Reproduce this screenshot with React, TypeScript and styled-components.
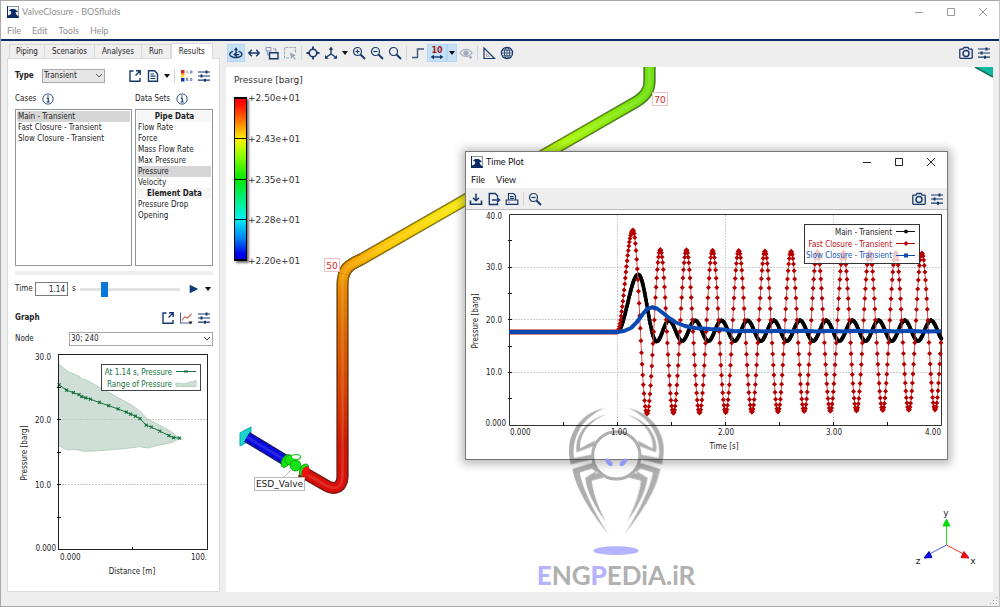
import React, { ReactNode, useState } from "react";
import styled, { createGlobalStyle, css } from "styled-components";

const NAVY = "#17386c";
const UI = '"DejaVu Sans Condensed", "Noto Sans", sans-serif';
const TITLE = 'Lato, "Noto Sans", sans-serif';
const WIDE = '"DejaVu Sans", sans-serif';

const GlobalStyle = createGlobalStyle`
  *, *::before, *::after { box-sizing: border-box; }
  body { margin: 0; font: 8px/10px ${UI}; color: #1c1c1c; background: #eee; }
  button, input, select { font: inherit; color: inherit; margin: 0; }
  button { border: 0; background: none; padding: 0; }
  ul { margin: 0; padding: 0; list-style: none; }
  svg { display: block; }
`;

/* ---------- window frame ---------- */

const Frame = styled.div`
  min-height: 100vh;
  display: flex;
  flex-direction: column;
  background: #eee;
  border: 1px solid #a9a9a9;
  border-right-color: #c4c4c4;
`;

const TitleBar = styled.header<{ $active?: boolean }>`
  display: flex;
  align-items: center;
  height: ${(p) => (p.$active ? 20 : 22)}px;
  padding-left: ${(p) => (p.$active ? 5 : 6)}px;
  background: #fff;
  color: ${(p) => (p.$active ? "#111" : "#8f8f8f")};
  font-family: ${TITLE};
`;

const WindowTitle = styled.h1`
  flex: 1;
  margin: 0 0 0 3px;
  font-size: 9px;
  font-weight: 400;
`;

const WindowButton = styled.button`
  width: 32px;
  height: 20px;
  display: grid;
  place-items: center;
`;

const MenuBar = styled.nav<{ $active?: boolean }>`
  display: flex;
  align-items: center;
  gap: 11px;
  height: 16px;
  padding-left: ${(p) => (p.$active ? 5 : 6)}px;
  background: #fff;
  color: ${(p) => (p.$active ? "#111" : "#8f8f8f")};
  font-family: ${TITLE};
  font-size: 9px;
`;

const Rule = styled.div`
  height: 2px;
  background: #0a2a66;
`;

const Body = styled.div`
  flex: 1;
  display: flex;
  gap: 5px;
  padding-left: 6px;
`;

const StatusBar = styled.footer`
  height: 14px;
  display: flex;
  justify-content: flex-end;
  align-items: flex-end;
`;

/* ---------- sidebar ---------- */

const Sidebar = styled.aside`
  width: 213px;
  display: flex;
  flex-direction: column;
  padding-top: 2px;
`;

const Tabs = styled.div`
  display: flex;
  align-items: flex-end;
  height: 15px;
  padding-left: 2px;
`;

const Tab = styled.button<{ $on?: boolean }>`
  height: ${(p) => (p.$on ? 16 : 14)}px;
  margin-bottom: ${(p) => (p.$on ? -1 : 0)}px;
  padding: 0 7px;
  border: 1px solid #dadada;
  border-left-width: ${(p) => (p.$on ? 1 : 0)}px;
  border-bottom: 0;
  background: ${(p) => (p.$on ? "#fff" : "#efefef")};
  position: relative;
  &:first-child { border-left-width: 1px; padding: 0 6px; }
`;

const Panel = styled.div`
  flex: 1;
  display: flex;
  flex-direction: column;
  padding: 8px 6px 0 7px;
  background: #fff;
  border: 1px solid #dcdcdc;
`;

const Row = styled.div<{ $h: number; $top?: number }>`
  display: flex;
  align-items: center;
  height: ${(p) => p.$h}px;
  margin-top: ${(p) => p.$top ?? 0}px;
`;

const Heading = styled.label`
  width: 27px;
  font-weight: 700;
`;

const GraphHeading = styled.h2`
  flex: 1;
  margin: 0;
  font-size: 8px;
  font-weight: 700;
`;

const FieldLabel = styled.label<{ $w: number }>`
  width: ${(p) => p.$w}px;
`;

const Unit = styled.span`
  padding-left: 4px;
`;

const SelectBox = styled.span<{ $w?: number; $grey?: boolean }>`
  position: relative;
  ${(p) => (p.$w ? css`width: ${p.$w}px;` : css`flex: 1;`)}
  select {
    display: block;
    width: 100%;
    height: 14px;
    padding: 0 1px;
    appearance: none;
    border: 1px solid #a8a8a8;
    border-radius: 0;
    background: ${(p) => (p.$grey ? "#e6e6e6" : "#fff")};
  }
  svg {
    position: absolute;
    right: 2px;
    top: 4px;
    pointer-events: none;
  }
`;

const Spacer = styled.span`
  flex: 1;
`;

const Tool = styled.button<{ $w?: number; $on?: boolean }>`
  flex: none;
  width: ${(p) => p.$w ?? 18}px;
  height: 18px;
  display: grid;
  place-items: center;
  background: ${(p) => (p.$on ? "#c5e0f7" : "transparent")};
  box-shadow: ${(p) => (p.$on ? "inset 0 0 0 1px #b2d6f3" : "none")};
`;

const Separator = styled.span`
  flex: none;
  width: 5px;
  height: 14px;
  display: flex;
  justify-content: center;
  &::before { content: ""; width: 1px; background: #d4d4d4; }
`;

const Lists = styled.div`
  display: grid;
  grid-template-columns: 117px 1fr;
  column-gap: 3px;
`;

const ListLabel = styled.div`
  display: flex;
  align-items: center;
  gap: 6px;
  height: 24px;
  padding-top: 4px;
`;

const List = styled.ul`
  height: 157px;
  padding: 1px;
  border: 1px solid #8e959e;
`;

const Option = styled.li<{ $on?: boolean; $head?: boolean }>`
  height: 11px;
  line-height: 12px;
  padding-left: 1px;
  background: ${(p) => (p.$on ? "#d6d6d6" : p.$head ? "#f6f6f6" : "none")};
  ${(p) => p.$head && css`font-weight: 700; text-align: center;`}
`;

const Splitter = styled.div`
  height: 4px;
  margin: 5px 0;
  background: #eee;
`;

const NumberInput = styled.input`
  width: 33px;
  height: 14px;
  padding: 0 2px;
  text-align: right;
  border: 1px solid #7a7a7a;
  border-radius: 0;
`;

const Slider = styled.input`
  width: 100px;
  height: 16px;
  margin: 0 4px;
  appearance: none;
  background: none;
  &::-webkit-slider-runnable-track { height: 3px; background: #e2e2e2; }
  &::-webkit-slider-thumb {
    appearance: none;
    width: 7px;
    height: 15px;
    margin-top: -6px;
    background: #0a78d8;
  }
`;

const ChartSvg = styled.svg<{ $top?: number }>`
  width: 100%;
  height: auto;
  margin-top: ${(p) => p.$top ?? 0}px;
  font-family: ${UI};
  font-size: 8px;
  fill: #1c1c1c;
`;

/* ---------- main view ---------- */

const Main = styled.main`
  flex: 1;
  min-width: 0;
  display: flex;
  flex-direction: column;
  padding-right: 6px;
`;

const Toolbar = styled.div`
  display: flex;
  align-items: center;
  height: 26px;
  padding: 0 0 3px 2px;
`;

const Stage = styled.section`
  flex: 1;
  position: relative;
  min-height: 525px;
  margin-left: 1px;
  background: #fff;
`;

const SceneSvg = styled.svg`
  width: 100%;
  height: 100%;
  position: absolute;
  font-family: ${WIDE};
  font-size: 9px;
`;

const ColourScale = styled.div`
  position: absolute;
  left: 8px;
  top: 8px;
  font: 9px/10px ${WIDE};
  color: #333;
`;

const ScaleBody = styled.div`
  display: flex;
  height: 173px;
  margin-top: 8px;
`;

const ScaleBar = styled.div`
  width: 13px;
  margin: 4px 1px 5px 0;
  display: flex;
  flex-direction: column;
  border: 1px solid #000;
  border-width: 2px 1px;
  background: linear-gradient(#f00 2%, #ff5000 10%, #f79a00 17%, #fff000 25%, #9cff00 34%, #00e800 50%, #00ee70 61%, #00f4f4 75%, #0078f0 88%, #0000e8 97%);
  box-shadow: 2px 2px 2px #777;
`;

const ScaleSegment = styled.div`
  flex: 1;
  & + & { border-top: 1px solid #000; }
`;

const ScaleLabels = styled.div`
  display: flex;
  flex-direction: column;
  justify-content: space-between;
`;

const PlotWindow = styled.section`
  position: absolute;
  left: 239px;
  top: 84px;
  width: 483px;
  background: #fff;
  border: 1px solid #777;
  box-shadow: 0 1px 9px 3px rgba(0, 0, 0, 0.28);
`;

const PlotToolbar = styled.div`
  display: flex;
  align-items: center;
  height: 22px;
  padding: 0 1px;
  background: #eee;
  border-bottom: 1px solid #bdbdbd;
`;

const Watermark = styled.div`
  position: absolute;
  left: 310px;
  top: 338px;
  width: 160px;
  display: flex;
  flex-direction: column;
  align-items: center;
  pointer-events: none;
`;

const WatermarkName = styled.div`
  margin-top: 4px;
  font: 700 26px/32px Lato, sans-serif;
  color: #b0b0b0;
  white-space: nowrap;
  b { color: #b3b3ff; }
`;

/* ---------- icons ---------- */

const Icon = ({ children, size = 14, color = NAVY }: { children: ReactNode; size?: number; color?: string }) => (
  <svg width={size} height={size} viewBox="0 0 14 14" fill="none" stroke={color} strokeWidth="1.4" aria-hidden="true">
    {children}
  </svg>
);

const Caret = () => (
  <svg width="6" height="4" viewBox="0 0 6 4" aria-hidden="true">
    <path d="M0 0h6L3 4z" fill="#111" />
  </svg>
);

const Chevron = () => (
  <svg width="8" height="6" viewBox="0 0 8 6" fill="none" stroke="#555" aria-hidden="true">
    <path d="M1 1l3 3 3-3" />
  </svg>
);

const Logo = () => (
  <svg width="12" height="12" viewBox="0 0 12 12" aria-hidden="true">
    <rect x="0.5" y="0.5" width="11" height="11" fill="#f4f4ee" stroke="#8c97a8" />
    <path d="M2 4.5C4 2.6 8 2.6 9.5 4.5l1 .5v1.2L8.6 6c.2 2 1 3.4 2.9 4v2H0V9.500C3 9.500 4.500 8 4.300 6 3.500 5 2.600 5 2 4.500z" fill="#0a2a66" />
    <path d="M0 0h1v12H0zM0 11h12v1H0z" fill="#0a2a66" />
  </svg>
);

const InfoIcon = () => (
  <Icon size={12}>
    <circle cx="7" cy="7" r="6" strokeWidth="1" />
    <path d="M5.500 6H7.300v4.500M5.300 10.500h3.800" strokeWidth="1.400" />
    <circle cx="7" cy="3.600" r="0.900" fill={NAVY} stroke="none" />
  </Icon>
);

const OpenIcon = () => (
  <Icon>
    <path d="M5.500 2H2v10.300h10V9" />
    <path d="M8 1.800h4.200V6M12 2L7.500 6.500" />
  </Icon>
);

const DocIcon = () => (
  <Icon>
    <path d="M2.500 1.700h6l3 3v7.600h-9z" />
    <path d="M4.500 5h3.500M4.500 7.200h5M4.500 9.500h5" strokeWidth="1.200" />
  </Icon>
);

const LegendIcon = () => (
  <Icon>
    <path d="M2 1h3.500v3H2z" fill="#e02020" stroke="none" />
    <path d="M2 4h3.500v2.500H2z" fill="#ff9c20" stroke="none" />
    <path d="M2 6.500h3.500V9H2z" fill="#ffe04a" stroke="none" />
    <path d="M2 9h3.500v3.500H2z" fill="#1030c0" stroke="none" />
    <path d="M8 1.500v2.500M9.500 4h.8M11.500 2v2h1.500V2zM7.500 9v2.500h1V9zM9.500 11.500h.8M11.500 9.500v2h1.500v-2z" strokeWidth="0.800" stroke="#5c7297" />
  </Icon>
);

const SlidersIcon = () => (
  <Icon>
    <path d="M1 3h12M1 7h12M1 11.200h12" strokeWidth="1.200" />
    <path d="M8.500 1.500h2v3h-2zM3.500 5.500h2v3h-2zM7 9.700h2v3H7z" fill={NAVY} stroke="none" />
  </Icon>
);

const GraphIcon = () => (
  <Icon>
    <path d="M1.500 1.500V12H13" strokeWidth="1.100" stroke="#4d6387" />
    <path d="M3 9.500L5.500 6l3 1L12.500 3" stroke="#c86464" strokeWidth="1.100" />
    <path d="M9.500 10.500h4l-2 2.500z" fill="#111" stroke="none" />
  </Icon>
);

const OrbitIcon = () => (
  <Icon>
    <path d="M4 5.300C-.3 6.500-.3 9.800 3.500 11c3.500 1 9 .5 9.300-2.300C13 7 11.500 5.800 9.500 5.400" />
    <path d="M7 3v4.500M4.800 8.600h5.500M8.200 6.300L5.300 8.500l2.900 2.200" />
    <path d="M4.800 4.300L7 1.300l2.200 3z" fill={NAVY} stroke="none" />
  </Icon>
);

const StretchIcon = () => (
  <Icon>
    <path d="M2 7h10M4.800 3.800L1.800 7l3 3.200M9.200 3.800l3 3.200-3 3.200" />
  </Icon>
);

const ArrangeIcon = () => (
  <Icon>
    <path d="M1 1.500h5v3.500H1zM8 3h3v3" stroke="#8b9bb5" strokeWidth="1" />
    <path d="M2.500 5v4h2" stroke="#8b9bb5" strokeWidth="1" />
    <path d="M4.500 6.700h8.500v6H4.500z" />
  </Icon>
);

const AreaIcon = () => (
  <Icon color="#9aa6ba">
    <path d="M6 12H1.500V1.500H12.500V7" strokeWidth="1.100" strokeDasharray="3 1" />
    <path d="M7 6.500l6 3-2.500.8L12.800 13l-1 .8-2.200-2.800L8 13z" fill="#9aa6ba" stroke="none" />
  </Icon>
);

const TargetIcon = () => (
  <Icon>
    <circle cx="7" cy="7" r="3.800" strokeWidth="1.600" />
    <path d="M7 .5v3.500M7 10v3.500M.5 7H4M10 7h3.500" strokeWidth="1.800" />
  </Icon>
);

const AxesIcon = () => (
  <Icon>
    <path d="M7 8V2M7 8l-4.500 3M7 8l4.500 3" />
    <path d="M4.800 3.800L7 .5l2.200 3.300zM1 9v3.800h3.800zM13 9v3.800H9.200z" fill={NAVY} stroke="none" />
  </Icon>
);

const ZoomIcon = ({ sign }: { sign?: "+" | "-" }) => (
  <Icon>
    <circle cx="5.500" cy="5.500" r="4" strokeWidth="1.200" />
    <path d="M8.500 8.500l4.500 4.500" strokeWidth="2" />
    {sign && <path d={sign === "+" ? "M3.500 5.500h4M5.500 3.500v4" : "M3.500 5.500h4"} strokeWidth="1.200" />}
  </Icon>
);

const StepIcon = () => (
  <Icon color="#3c5680">
    <path d="M1 11.500h5.500V3H13" />
  </Icon>
);

const NodeNumberIcon = () => (
  <Icon>
    <text x="7" y="6.500" textAnchor="middle" fontSize="8" fontWeight="700" fill="#a01818" stroke="none" fontFamily="DejaVu Sans">
      10
    </text>
    <path d="M2 11h10" />
    <path d="M.5 11L4 8.800v4.400zM13.500 11L10 8.800v4.400z" fill={NAVY} stroke="none" />
  </Icon>
);

const EyeIcon = () => (
  <Icon color="#a3adbd">
    <path d="M1 7c3-5 9-5 12 0-3 4.500-9 4.500-12 0z" strokeWidth="1.200" />
    <circle cx="7" cy="7" r="2" fill="#a3adbd" />
    <path d="M9.500 10.500h4l-2 2.500z" fill="#8d97a8" stroke="none" />
  </Icon>
);

const RulerIcon = () => (
  <Icon>
    <path d="M2 2v10.500h10.500z" strokeWidth="1.200" />
    <path d="M4.500 7.500v3h3z" stroke="#c59aa6" strokeWidth="0.800" />
  </Icon>
);

const GlobeIcon = () => (
  <Icon>
    <circle cx="7" cy="7" r="5.600" strokeWidth="1.200" />
    <ellipse cx="7" cy="7" rx="2.600" ry="5.600" strokeWidth="0.900" />
    <path d="M1.500 7h11M2.300 4.200h9.400M2.300 9.800h9.400M7 1.500v11" strokeWidth="0.800" />
  </Icon>
);

const CameraIcon = () => (
  <Icon>
    <path d="M.8 4Q.8 3.200 1.600 3.200H4L5 1.500h4l1 1.700h2.400q.8 0 .8.800v7.500q0 .8-.8.800H1.600q-.8 0-.8-.8z" strokeWidth="1.300" />
    <circle cx="7" cy="7.500" r="3" strokeWidth="1.500" />
  </Icon>
);

const DownloadIcon = () => (
  <Icon>
    <path d="M7 1.500v7M4 5.800l3 3 3-3" strokeWidth="1.500" />
    <path d="M1.500 8.500v3.800h11V8.500" strokeWidth="1.600" />
  </Icon>
);

const ExportIcon = () => (
  <Icon>
    <path d="M10.500 5V3.800L8.300 1.500H2.300v11h8.200V11" />
    <path d="M5 8h7M10 5.500L12.500 8 10 10.500" strokeWidth="1.500" />
  </Icon>
);

const PrintIcon = () => (
  <Icon>
    <path d="M3.500 8V1.500h5l2 2V8" strokeWidth="1.200" />
    <path d="M1.200 8h11.600v4.300H1.200zM5 4.500h3.500M5 6.300h4" strokeWidth="1.200" />
    <circle cx="4" cy="10.200" r="0.700" fill="#d03030" stroke="none" />
  </Icon>
);

const PlayIcon = () => (
  <Icon size={10}>
    <path d="M1 1l12 6-12 6z" fill="#0d3a78" stroke="none" />
  </Icon>
);

const WindowControls = ({ color }: { color: string }) => (
  <>
    {[
      ["Minimize", "M1 5.500h8"],
      ["Maximize", "M1.500 1.500h7v7h-7z"],
      ["Close", "M1 1l8 8M9 1l-8 8"],
    ].map(([name, d]) => (
      <WindowButton key={name} aria-label={name}>
        <svg width="10" height="10" viewBox="0 0 10 10" fill="none" stroke={color}>
          <path d={d} />
        </svg>
      </WindowButton>
    ))}
  </>
);

/* ---------- profile chart ---------- */

type Point = [number, number];
const toPath = (pts: Point[]) => "M" + pts.map(([x, y]) => `${x.toFixed(1)} ${y.toFixed(1)}`).join("L");

const profile: Point[] = [
  [0.4, 25.4], [5.4, 24.6], [10, 24.2], [13.8, 23.9], [15.6, 23.6], [18.3, 23.4], [21.4, 23.2],
  [27.5, 22.7], [33.7, 22.2], [40, 21.7], [45.5, 21.2], [48.4, 20.9], [51.6, 20.6], [54.7, 20.2],
  [58.9, 19.2], [62.3, 18.9], [67.9, 18.3], [74.1, 17.6], [77.2, 17.3], [81.3, 17.2],
];
const rangeTop: Point[] = [
  [0, 28.7], [2.7, 28.1], [6, 27.5], [9.8, 27.1], [13.6, 26.8], [15.6, 26.3], [18.3, 26.2], [28.3, 24.9],
  [38.8, 23.6], [48.9, 22.3], [54.5, 21.4], [59.4, 20.2], [67.9, 19.2], [75.7, 18.2], [81.3, 17.2],
];
const rangeBottom: Point[] = [
  [81.3, 17.2], [77.9, 16.7], [73.4, 16.4], [66.7, 16.1], [60, 15.7], [54.5, 15.9], [47.8, 15.7], [34.4, 15.4],
  [21, 15.2], [16, 15.2], [13.2, 15.4], [10.3, 15.5], [6.5, 15.4], [3.1, 15.7], [0, 16.1],
];

const ProfileChart = () => {
  const map = ([x, y]: Point): Point => [43.5 + x * 1.49, 200 - y * 6.5];
  const green = "#14703c";
  const cross = (x: number, y: number) => `M${x - 1.5} ${y - 1.5}l3 3M${x - 1.5} ${y + 1.5}l3-3`;
  return (
    <ChartSvg $top={4} viewBox="0 0 198 230" role="img" aria-label="Pressure over distance">
      <path d={toPath([...rangeTop, ...rangeBottom].map(map)) + "Z"} fill="#cfdfd7" stroke="#b5cfc0" />
      <path d="M44 69.500h149M44 134.500h149" stroke="#c4c4c4" strokeDasharray="2 1" />
      <path d={toPath(profile.map(map))} fill="none" stroke={green} />
      <path d={profile.map((p) => cross(...map(p))).join("")} stroke={green} strokeWidth="1.200" />
      <rect x="43.500" y="4.500" width="149" height="195" fill="none" stroke="#222" />
      <path d="M42 37.500h4M42 69.500h4M42 102.500h4M42 134.500h4M42 167.500h4M117.500 197v3" stroke="#111" />
      <rect x="86.500" y="14.500" width="99" height="26" fill="#fff" stroke="#444" />
      <g fill={green} textAnchor="end">
        <text x="157" y="25">At 1.14 s, Pressure</text>
        <text x="157" y="37">Range of Pressure</text>
      </g>
      <path d={"M161 21.500h20" + cross(171, 21.5)} stroke={green} />
      <path d="M161 33l8 1 12-3.500v6h-20z" fill="#cfdfd7" stroke="#b5cfc0" />
      <g textAnchor="end">
        <text x="36" y="10">30.0</text>
        <text x="36" y="73">20.0</text>
        <text x="36" y="138">10.0</text>
        <text x="41" y="201">0.000</text>
        <text x="192" y="210">100.</text>
      </g>
      <text x="45" y="210">0.000</text>
      <text x="117" y="224" textAnchor="middle">Distance [m]</text>
      <text transform="translate(12 103) rotate(-90)" textAnchor="middle">Pressure [barg]</text>
    </ChartSvg>
  );
};

/* ---------- time plot ---------- */

// Joins successive extrema with half-cosine arcs.
const wave = (extrema: Point[], step: number, endX: number): Point[] => {
  const out: Point[] = [];
  for (let i = 0; i < extrema.length - 1; i++) {
    const [x0, y0] = extrema[i];
    const [x1, y1] = extrema[i + 1];
    const n = Math.round((x1 - x0) / step);
    for (let k = 0; k < n; k++) {
      const t = k / n;
      const x = x0 + (x1 - x0) * t;
      if (x <= endX) out.push([x, y0 + ((y1 - y0) * (1 - Math.cos(Math.PI * t))) / 2]);
    }
  }
  return out;
};

const FLAT = 122;
const redExtrema: Point[] = [[151, FLAT], [167, 20], [181, 204]];
for (let i = 0; i < 23; i++) {
  redExtrema.push([194.3 + i * 13.08, i % 2 ? 203.5 - i * 0.17 : 39.5 + i * 0.17]);
}
const blackExtrema: Point[] = [[151, FLAT], [172.3, 64.5], [190.5, 131.5]];
for (let i = 0; i < 22; i++) {
  blackExtrema.push([203 + i * 13.1, i % 2 ? 131 : 110.5]);
}
const fast = wave(redExtrema, 0.6, 475.5);
const main = wave(blackExtrema, 0.7, 475.5);
const slow: Point[] = [
  [43, FLAT], [151, FLAT], [158, 121], [165, 118], [171, 112], [176, 105], [181, 99], [186, 97.3], [191, 98.5],
  [197, 103], [203, 108], [210, 112.5], [219, 116], [229, 118], [244, 119], [258, 119.5], [268, 121.3], [286, 120.8],
  [298, 121.5], [312, 120.8], [325, 121.5], [338, 120.8], [351, 121.5], [364, 120.8], [377, 121.5], [390, 120.8],
  [404, 121.5], [417, 120.8], [430, 121.5], [443, 120.8], [456, 121.5], [475, 121.2],
];

const TimeChart = () => {
  const red = "#b40000";
  const diamond = ([x, y]: Point) => `M${x.toFixed(1)} ${(y - 2.5).toFixed(1)}l2.500 2.500-2.500 2.500-2.500-2.500z`;
  const dot = ([x, y]: Point) => `M${(x - 2).toFixed(1)} ${y.toFixed(1)}a2 2 0 1 0 4 0a2 2 0 1 0-4 0z`;
  return (
    <ChartSvg viewBox="0 0 481 249" role="img" aria-label="Pressure over time">
      <path d="M43 57.500h432M43 109.500h432M43 162.500h432M151.500 5v210M259.500 5v210M367.500 5v210" stroke="#ccc" strokeDasharray="2 1" />
      <path d="M43.500 4.500h432v211h-432z" fill="none" stroke="#333" />
      <path d="M42 30.500h4M42 57.500h4M42 83.500h4M42 109.500h4M42 136.500h4M42 162.500h4M42 188.500h4M97.500 212v4M151.500 212v4M205.500 212v4M259.500 212v4M313.500 212v4M367.500 212v4M421.500 212v4" stroke="#111" />
      <path d={toPath(main)} fill="none" stroke="#000" strokeWidth="3.500" />
      <path d={main.map(dot).join("")} fill="#000" />
      <path d={`M43 ${FLAT}H151`} stroke={red} strokeWidth="5" />
      <path d={toPath(fast)} fill="none" stroke="#cf5050" />
      <path d={fast.map(diamond).join("")} fill={red} />
      <path d={toPath(slow)} fill="none" stroke="#0849b4" strokeWidth="4" strokeLinejoin="round" />
      <rect x="338.500" y="14.500" width="115" height="39" fill="#fff" fillOpacity="0.780" stroke="#333" />
      <g textAnchor="end">
        <text x="426" y="25">Main - Transient</text>
        <text x="426" y="37" fill="#c01010">Fast Closure - Transient</text>
        <text x="426" y="48" fill="#1257b8">Slow Closure - Transient</text>
        <text x="36" y="9">40.0</text>
        <text x="36" y="60">30.0</text>
        <text x="36" y="113">20.0</text>
        <text x="36" y="165">10.0</text>
        <text x="40" y="216">0.000</text>
        <text x="475" y="225">4.00</text>
      </g>
      <path d="M430 21.500h19" stroke="#111" />
      <path d={dot([440, 21.5])} fill="#111" />
      <path d="M430 33.500h19" stroke={red} />
      <path d={diamond([440, 33.5])} fill={red} />
      <path d="M430 45.500h19" stroke="#0849b4" />
      <path d="M438 43.500h4v4h-4z" fill="#0849b4" />
      <text x="44" y="225">0.000</text>
      <g textAnchor="middle">
        <text x="153" y="225">1.00</text>
        <text x="260" y="225">2.00</text>
        <text x="368" y="225">3.00</text>
        <text x="258" y="239">Time [s]</text>
        <text transform="translate(12 111) rotate(-90)">Pressure [barg]</text>
      </g>
    </ChartSvg>
  );
};

/* ---------- 3D scene ---------- */

const riserPath = "M75 404L101 419C110 424 116.500 419 116.500 409V218C116.500 203 122 198 136 192";
const runPath = "M118 207C120 199 126 197 136 192L410 35C419 29 423.500 24 423.500 14V-4";

const Pipe = ({ d, paint, width = 12 }: { d: string; paint: string; width?: number }) => (
  <g fill="none">
    <path d={d} stroke="#222" strokeWidth={width} />
    <path d={d} stroke={paint} strokeWidth={width} opacity="0.500" />
    <path d={d} stroke={paint} strokeWidth={width - 3} />
    <path d={d} stroke="#fff" strokeWidth="3" opacity="0.120" />
  </g>
);

const NodeTag = ({ x, y, children }: { x: number; y: number; children: ReactNode }) => (
  <g>
    <rect x={x} y={y} width="15" height="13" fill="#fff" stroke="#f0c0c0" />
    <text x={x + 7.5} y={y + 10} textAnchor="middle" fill="#d02828">{children}</text>
  </g>
);

const Scene = () => (
  <SceneSvg viewBox="0 0 767 525" preserveAspectRatio="xMidYMid meet" role="img" aria-label="Pipe model">
    <defs>
      <linearGradient id="riser" gradientUnits="userSpaceOnUse" x1="0" y1="192" x2="0" y2="424">
        <stop offset="0" stopColor="#ffb400" />
        <stop offset="0.130" stopColor="#e88600" />
        <stop offset="0.300" stopColor="#dc6800" />
        <stop offset="0.550" stopColor="#d84400" />
        <stop offset="0.800" stopColor="#d01800" />
        <stop offset="1" stopColor="#dc0c08" />
      </linearGradient>
      <linearGradient id="run" gradientUnits="userSpaceOnUse" x1="118" y1="0" x2="424" y2="0">
        <stop offset="0" stopColor="#f49c00" />
        <stop offset="0.120" stopColor="#ffc400" />
        <stop offset="0.380" stopColor="#f6ea10" />
        <stop offset="0.680" stopColor="#b4fa08" />
        <stop offset="1" stopColor="#6fe010" />
      </linearGradient>
    </defs>

    <Pipe d={riserPath} paint="url(#riser)" />
    <Pipe d={runPath} paint="url(#run)" />

    <path d="M14 366l11-6v13l-11 6z" fill="#18d4cc" stroke="#0aa8a4" />
    <Pipe d="M21 370l38 23" paint="#0808e0" width={11} />
    <g fill="#14e414" stroke="#0a9a0a" strokeWidth="0.800">
      <ellipse cx="60" cy="394" rx="4" ry="7" transform="rotate(28 60 394)" />
      <circle cx="64" cy="393" r="5" />
      <ellipse cx="78" cy="403" rx="4" ry="6.500" transform="rotate(28 78 403)" />
      <circle cx="69.500" cy="398.500" r="5.500" />
      <path d="M70 390v5" />
      <ellipse cx="70" cy="390" rx="4.500" ry="2.500" fill="#fff" stroke="#14d414" strokeWidth="1.200" />
    </g>
    <ellipse cx="79.500" cy="404.500" rx="3.500" ry="5.500" transform="rotate(28 79.500 404.500)" fill="#f01010" />

    <path d="M58 410l8-8" stroke="#bbb" />
    <rect x="28.500" y="410.500" width="50" height="13" fill="#fff" stroke="#bbb" />
    <text x="53.500" y="420" textAnchor="middle" fill="#222">ESD_Valve</text>
    <NodeTag x={98.5} y={191.5}>50</NodeTag>
    <NodeTag x={426.5} y={25.5}>70</NodeTag>

    <path d="M749 0h18v10z" fill="#10b8a4" />
    <path d="M749 0l18 10" stroke="#106a50" strokeWidth="1.500" />

    <path d="M720.500 478v-20" stroke="#20e020" />
    <path d="M720.500 478l19 10" stroke="#f03030" />
    <path d="M720.500 478l-19 10" stroke="#4060f0" />
    <path d="M720.500 452l3.500 7h-7z" fill="#08d808" stroke="#08d808" />
    <path d="M743 491l-8-.500 3-6z" fill="#f00808" stroke="#e00808" />
    <path d="M698 491l8-.500-3-6z" fill="#0808e0" stroke="#0808c8" />
    <g textAnchor="middle" fill="#222">
      <text x="720" y="449">y</text>
      <text x="747" y="497">x</text>
      <text x="692" y="497">z</text>
    </g>
  </SceneSvg>
);

const LegPaths = () => (
  <>
    <path d="M258 23C190 35 148 90 148 150 148 168 150 180 153 193L222 177 219 163 163 174C155 110 190 50 258 23z" />
    <path d="M262 42C195 60 164 110 171 157L222 138 226 121 181 145C180 105 205 65 262 42z" />
    <path d="M158 207L222 187 234 212 222 226 200 230 228 214 216 206 180 217C190 270 230 350 272 410 210 335 170 270 158 207z" />
    <path d="M196 233L236 218 254 232 216 242C222 290 240 330 260 368 225 320 203 280 196 233z" />
  </>
);

const WatermarkLogo = () => (
  <svg width="160" height="150" viewBox="49 15 480 450" aria-hidden="true">
    <g fill="#000" opacity="0.320">
      <LegPaths />
      <g transform="translate(580 0) scale(-1 1)">
        <LegPaths />
      </g>
      <circle cx="290" cy="166" r="71" fill="none" stroke="#000" strokeWidth="9" />
    </g>
    <g fill="#8f98f2">
      <ellipse cx="268" cy="187" rx="14" ry="7" transform="rotate(48 268 187)" />
      <ellipse cx="311" cy="187" rx="14" ry="7" transform="rotate(-48 311 187)" />
    </g>
    <ellipse cx="289" cy="452" rx="68" ry="13" fill="#b3b3ff" />
  </svg>
);

/* ---------- application ---------- */

const cases = ["Main - Transient", "Fast Closure - Transient", "Slow Closure - Transient"];
const dataSets = [
  { title: "Pipe Data", items: ["Flow Rate", "Force", "Mass Flow Rate", "Max Pressure", "Pressure", "Velocity"] },
  { title: "Element Data", items: ["Pressure Drop", "Opening"] },
];
const tabs = ["Piping", "Scenarios", "Analyses", "Run", "Results"];

export default function App() {
  const [tab, setTab] = useState("Results");
  const [selectedCase, setSelectedCase] = useState(cases[0]);
  const [dataSet, setDataSet] = useState("Pressure");
  const [time, setTime] = useState("1.14");

  return (
    <Frame>
      <GlobalStyle />
      <TitleBar>
        <Logo />
        <WindowTitle>ValveClosure - BOSfluids</WindowTitle>
        <WindowControls color="#999" />
      </TitleBar>
      <MenuBar>
        {["File", "Edit", "Tools", "Help"].map((m) => (
          <button key={m}>{m}</button>
        ))}
      </MenuBar>
      <Rule />
      <Body>
        <Sidebar>
          <Tabs role="tablist">
            {tabs.map((t) => (
              <Tab key={t} role="tab" aria-selected={t === tab} $on={t === tab} onClick={() => setTab(t)}>
                {t}
              </Tab>
            ))}
          </Tabs>
          <Panel>
            <Row $h={18}>
              <Heading htmlFor="type">Type</Heading>
              <SelectBox $w={63} $grey>
                <select id="type">
                  <option>Transient</option>
                </select>
                <Chevron />
              </SelectBox>
              <Spacer />
              <Tool aria-label="Open in window"><OpenIcon /></Tool>
              <Tool aria-label="Report"><DocIcon /></Tool>
              <Tool aria-label="Report options" $w={10}><Caret /></Tool>
              <Separator />
              <Tool aria-label="Legend"><LegendIcon /></Tool>
              <Tool aria-label="Settings"><SlidersIcon /></Tool>
            </Row>
            <Lists>
              <ListLabel><span id="cases">Cases</span><InfoIcon /></ListLabel>
              <ListLabel><span id="sets">Data Sets</span><InfoIcon /></ListLabel>
              <List role="listbox" aria-labelledby="cases">
                {cases.map((c) => (
                  <Option key={c} role="option" aria-selected={c === selectedCase} $on={c === selectedCase} onClick={() => setSelectedCase(c)}>
                    {c}
                  </Option>
                ))}
              </List>
              <List role="listbox" aria-labelledby="sets">
                {dataSets.map((g) => (
                  <React.Fragment key={g.title}>
                    <Option $head role="presentation">{g.title}</Option>
                    {g.items.map((i) => (
                      <Option key={i} role="option" aria-selected={i === dataSet} $on={i === dataSet} onClick={() => setDataSet(i)}>
                        {i}
                      </Option>
                    ))}
                  </React.Fragment>
                ))}
              </List>
            </Lists>
            <Splitter />
            <Row $h={18}>
              <FieldLabel htmlFor="time" $w={20}>Time</FieldLabel>
              <NumberInput id="time" value={time} onChange={(e) => setTime(e.target.value)} />
              <Unit>s</Unit>
              <Slider type="range" aria-label="Time slider" min="0" max="5" step="0.01" value={time} onChange={(e) => setTime(e.target.value)} />
              <Spacer />
              <Tool aria-label="Play"><PlayIcon /></Tool>
              <Tool aria-label="Play options" $w={10}><Caret /></Tool>
            </Row>
            <Row $h={18} $top={11}>
              <GraphHeading>Graph</GraphHeading>
              <Tool aria-label="Open graph in window"><OpenIcon /></Tool>
              <Tool aria-label="Graph type"><GraphIcon /></Tool>
              <Tool aria-label="Graph settings"><SlidersIcon /></Tool>
            </Row>
            <Row $h={14} $top={5}>
              <FieldLabel htmlFor="node" $w={54}>Node</FieldLabel>
              <SelectBox>
                <select id="node">
                  <option>30; 240</option>
                </select>
                <Chevron />
              </SelectBox>
            </Row>
            <ProfileChart />
          </Panel>
        </Sidebar>
        <Main>
          <Toolbar>
            <Tool $on aria-label="Orbit"><OrbitIcon /></Tool>
            <Tool aria-label="Pan"><StretchIcon /></Tool>
            <Tool aria-label="Arrange"><ArrangeIcon /></Tool>
            <Tool aria-label="Select area"><AreaIcon /></Tool>
            <Separator />
            <Tool aria-label="Centre"><TargetIcon /></Tool>
            <Tool aria-label="Axes"><AxesIcon /></Tool>
            <Tool aria-label="Axes options" $w={10}><Caret /></Tool>
            <Tool aria-label="Zoom in"><ZoomIcon sign="+" /></Tool>
            <Tool aria-label="Zoom out"><ZoomIcon sign="-" /></Tool>
            <Tool aria-label="Zoom to fit"><ZoomIcon /></Tool>
            <Separator />
            <Tool aria-label="Line view"><StepIcon /></Tool>
            <Tool $on $w={20} aria-label="Node numbers"><NodeNumberIcon /></Tool>
            <Tool $on aria-label="Node number options" $w={10}><Caret /></Tool>
            <Tool aria-label="Visibility"><EyeIcon /></Tool>
            <Separator />
            <Tool aria-label="Measure"><RulerIcon /></Tool>
            <Tool aria-label="Globe"><GlobeIcon /></Tool>
            <Spacer />
            <Tool aria-label="Snapshot"><CameraIcon /></Tool>
            <Tool aria-label="View settings"><SlidersIcon /></Tool>
          </Toolbar>
          <Stage>
            <Scene />
            <ColourScale>
              Pressure [barg]
              <ScaleBody>
                <ScaleBar>
                  {[0, 1, 2, 3].map((n) => (
                    <ScaleSegment key={n} />
                  ))}
                </ScaleBar>
                <ScaleLabels>
                  {["+2.50e+01", "+2.43e+01", "+2.35e+01", "+2.28e+01", "+2.20e+01"].map((l) => (
                    <span key={l}>{l}</span>
                  ))}
                </ScaleLabels>
              </ScaleBody>
            </ColourScale>
            <PlotWindow>
              <TitleBar $active>
                <Logo />
                <WindowTitle as="h2">Time Plot</WindowTitle>
                <WindowControls color="#222" />
              </TitleBar>
              <MenuBar $active>
                <button>File</button>
                <button>View</button>
              </MenuBar>
              <PlotToolbar>
                <Tool aria-label="Save"><DownloadIcon /></Tool>
                <Tool aria-label="Export"><ExportIcon /></Tool>
                <Tool aria-label="Print"><PrintIcon /></Tool>
                <Separator />
                <Tool aria-label="Zoom out"><ZoomIcon sign="-" /></Tool>
                <Spacer />
                <Tool aria-label="Snapshot"><CameraIcon /></Tool>
                <Tool aria-label="Plot settings"><SlidersIcon /></Tool>
              </PlotToolbar>
              <TimeChart />
            </PlotWindow>
            <Watermark>
              <WatermarkLogo />
              <WatermarkName>
                <b>E</b>NG<b>P</b>EDiA.iR
              </WatermarkName>
            </Watermark>
          </Stage>
        </Main>
      </Body>
      <StatusBar>
        <svg width="10" height="10" viewBox="0 0 10 10" fill="#aaa" aria-hidden="true">
          <path d="M7 1h1v1H7zM7 4h1v1H7zM4 4h1v1H4zM7 7h1v1H7zM4 7h1v1H4zM1 7h1v1H1z" />
        </svg>
      </StatusBar>
    </Frame>
  );
}
